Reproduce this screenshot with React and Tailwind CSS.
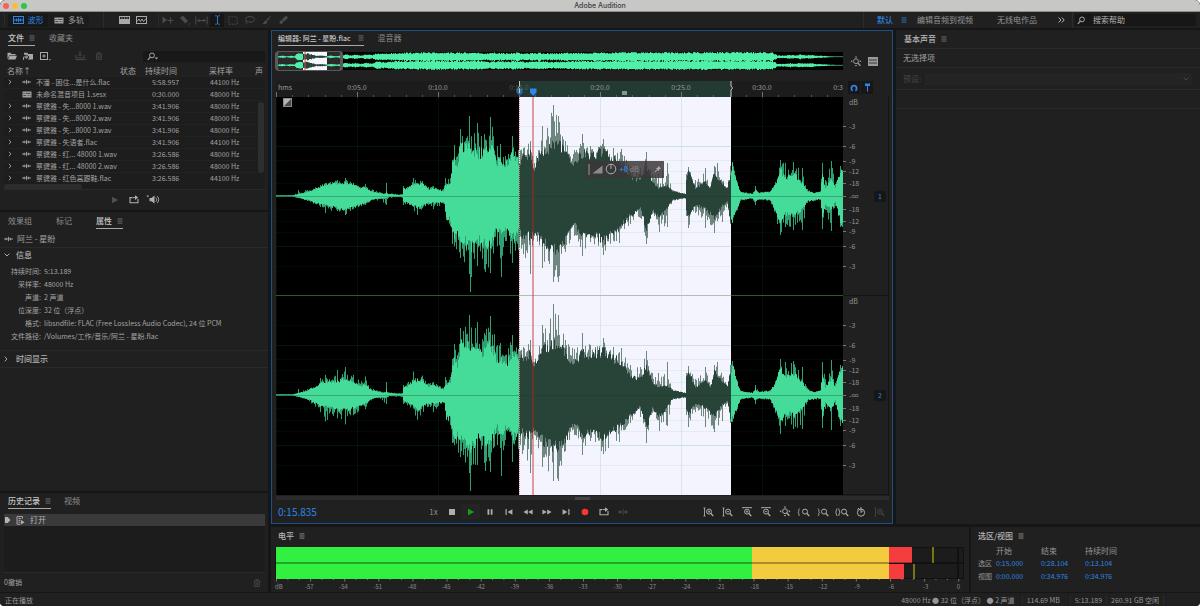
import React from "react";

/* ---------- waveform data: [x, body, peak] above and below the centre line ---------- */
const UPPER = [
  [0, 0.5, 0.5], [17, 0.5, 1], [22, 2, 6], [31, 4, 6], [44, 9, 11], [49, 11, 13], [61, 12, 16], [69, 13, 18], [77, 11, 13],
  [82, 8, 10], [89, 8, 12], [97, 4, 6], [109, 2, 3], [110, 5, 13], [111, 2, 3], [126, 1, 2], [127, 8, 10], [131, 7, 9], [137, 12, 18],
  [146, 12, 15], [152, 7, 9], [157, 8, 10], [167, 5, 7], [169, 10, 18], [174, 14, 18], [176, 31, 36], [178, 36, 51], [181, 31, 40], [184, 50, 67],
  [193, 50, 80], [201, 42, 73], [208, 44, 62], [214, 50, 79], [221, 34, 50], [224, 35, 52], [229, 30, 40], [236, 42, 60], [242, 34, 46],
  [247, 38, 48], [254, 42, 55], [258, 28, 33], [266, 45, 70], [277, 50, 91], [282, 52, 80], [289, 42, 55], [298, 32, 46],
  [306, 43, 62], [314, 40, 50], [327, 44, 57], [337, 36, 48], [345, 34, 47], [354, 18, 30], [364, 16, 28], [370, 30, 44],
  [376, 13, 22], [382, 8, 22], [391, 10, 33], [396, 5, 6], [404, 3, 3], [409, 2, 2], [410, 18, 22], [412, 24, 29], [419, 8, 16],
  [429, 14, 28], [434, 8, 10], [438, 24, 30], [441, 18, 33], [451, 8, 9], [454, 22, 30], [456, 30, 34], [461, 12, 14], [464, 4, 5],
  [476, 2, 2], [479, 6, 10], [482, 3, 4], [494, 4, 5], [499, 12, 14], [504, 26, 36], [509, 18, 33], [517, 22, 34], [526, 13, 28],
  [531, 5, 7], [537, 3, 3], [544, 4, 5], [546, 22, 33], [549, 8, 16], [555, 16, 35], [559, 8, 12], [564, 25, 30], [567, 28, 31],
];
const LOWER = [
  [0, 0.5, 0.5], [17, 0.5, 1], [31, 4, 5], [44, 9, 11], [49, 9, 17], [61, 12, 15], [69, 13, 19], [77, 11, 13], [89, 7, 9],
  [97, 3, 4], [110, 2, 9], [112, 1, 2], [126, 1, 2], [127, 6, 9], [131, 6, 8], [141, 12, 19], [152, 7, 9], [157, 7, 13], [168, 7, 8],
  [170, 22, 24], [174, 24, 30], [176, 38, 48], [184, 42, 62], [193, 50, 78], [194, 52, 96], [201, 44, 70], [209, 48, 76], [214, 50, 77],
  [221, 32, 50], [225, 38, 81], [229, 32, 45], [236, 42, 67], [242, 38, 54], [254, 40, 78], [258, 34, 40], [266, 46, 72], [277, 52, 86],
  [282, 54, 86], [289, 44, 56], [298, 27, 40], [306, 42, 60], [314, 38, 46], [327, 45, 59], [343, 31, 47], [354, 20, 28], [364, 12, 22], [370, 34, 48],
  [376, 14, 18], [383, 22, 36], [391, 12, 31], [396, 4, 5], [409, 2, 3], [410, 15, 20], [412, 20, 32], [419, 9, 17], [429, 13, 32],
  [438, 22, 37], [446, 10, 26], [451, 6, 8], [454, 25, 28], [456, 24, 27], [461, 12, 14], [464, 4, 5], [476, 2, 3], [479, 5, 9],
  [482, 3, 4], [494, 4, 5], [504, 26, 39], [509, 18, 31], [517, 20, 34], [526, 13, 34], [531, 5, 7], [544, 3, 4], [546, 22, 33],
  [549, 8, 14], [555, 14, 35], [559, 6, 10], [564, 26, 31], [567, 28, 33],
];

/* the second channel is louder in the two quiet opening phrases */
const louder = (table) =>
  table.map(([x, b, p]) => {
    const k = x > 40 && x < 96 ? 1.55 : x > 130 && x < 160 ? 1.3 : 1;
    return [x, b * (k > 1 ? 1.2 : 1), p * k];
  });

function at(table, x, k) {
  let i = 1;
  while (i < table.length - 1 && table[i][0] < x) i++;
  const a = table[i - 1];
  const b = table[i];
  const t = Math.min(1, Math.max(0, (x - a[0]) / (b[0] - a[0])));
  return a[k] + (b[k] - a[k]) * t;
}

function random(seed) {
  let s = seed;
  return () => {
    s = (s * 16807) % 2147483647;
    return s / 2147483647;
  };
}

function bars(table, sign, centre, seed, from, to) {
  const r = random(seed);
  let body = "";
  let peak = "";
  for (let x = 0; x < 567; x++) {
    const exact = table.some((p) => p[0] === x);
    const b = at(table, x, 1) * (0.86 + 0.26 * r());
    const span = Math.max(0, at(table, x, 2) - b);
    const n = r();
    const p = b + span * (exact ? 1 : n * n * 0.95);
    if (x >= from && x < to) {
      body += `M${x + 0.5} ${centre}v${(sign * Math.max(0.5, b)).toFixed(1)}`;
      peak += `M${x + 0.5} ${centre}v${(sign * Math.max(0.5, p)).toFixed(1)}`;
    }
  }
  return { body, peak };
}

const CHANNELS = [
  { centre: 99, up: 7789123, down: 99123451, upper: UPPER, lower: LOWER },
  { centre: 298, up: 42424242, down: 313373137, upper: louder(UPPER), lower: louder(LOWER) },
];
const ZONES = [
  { from: 0, to: 243, body: "#44dc98", peak: "#2fa071" },
  { from: 243, to: 455, body: "#284338", peak: "#6f857f" },
  { from: 455, to: 567, body: "#44dc98", peak: "#2fa071" },
];
const WAVES = CHANNELS.flatMap((c) =>
  ZONES.flatMap((z) =>
    [bars(c.upper, -1, c.centre, c.up, z.from, z.to), bars(c.lower, 1, c.centre, c.down, z.from, z.to)].map((d) => ({ ...d, z }))
  )
);

function Waveform() {
  return (
    <svg className="absolute inset-0 h-full w-full" viewBox="0 0 567 398" preserveAspectRatio="none" aria-label="波形">
      <rect width="567" height="398" fill="#000" />
      <rect x="243" width="212" height="398" fill="#f4f4ff" />
      {CHANNELS.map((c) =>
        [-70, -50, -36, -25, -13, 13, 25, 36, 50, 70].map((o) => (
          <path key={c.centre + o} d={`M0 ${c.centre + o + 0.5}H567`} stroke="#148a2a" strokeOpacity={Math.abs(o) === 50 ? 0.16 : 0.07} />
        ))
      )}
      {[0, 81, 162, 324, 405, 486].map((x) => (
        <path key={x} d={`M${x + 0.5} 0V398`} stroke="#1a8a30" strokeOpacity="0.12" />
      ))}
      {WAVES.map((w, i) => (
        <g key={i}>
          <path d={w.peak} stroke={w.z.peak} />
          <path d={w.body} stroke={w.z.body} />
        </g>
      ))}
      {CHANNELS.map((c) => (
        <path key={c.centre} d={`M0 ${c.centre + 0.5}H567`} stroke="#123c22" strokeOpacity="0.3" />
      ))}
      <path d="M0 198.5H243M455 198.5H567" stroke="#2c5a2c" />
      <path d="M243 198.5H455" stroke="#b4beb6" />
      <path d="M243.5 0V398" stroke="#d98080" strokeDasharray="1 1" />
      <path d="M257 0V398" stroke="#c81e1e" strokeOpacity="0.6" strokeWidth="1.4" />
    </svg>
  );
}

const OVERVIEW = [
  [0, 0.5], [6, 1.2], [10, 0.5], [14, 1.1], [18, 0.7], [20, 2.4], [23, 3.6], [27, 2.8], [31, 3.4], [35, 2.4], [40, 1], [46, 1.2], [50, 0.6], [54, 1.4],
  [60, 0.6], [66, 1.6], [70, 2.4], [74, 1.4], [79, 2.2], [84, 1.2], [90, 2.4], [96, 1.8], [100, 3.4], [108, 3], [118, 3.8], [150, 4.3], [180, 4.2], [205, 4.1],
  [212, 3], [216, 4], [230, 3.4], [238, 4.1], [250, 3.2], [262, 4], [276, 3.2], [290, 3.8], [320, 4.2],
  [380, 4.3], [440, 4.4], [496, 4.4], [501, 1.4], [508, 1.2], [514, 2], [519, 1.3], [524, 2.3], [530, 1.6], [534, 2], [540, 1.2], [546, 1], [552, 0.6], [560, 0.3], [567, 0.3],
];

function overviewPath(centre, seed) {
  const r = random(seed);
  let d = "";
  for (let x = 0; x < 567; x++) {
    const h = Math.max(0.3, at(OVERVIEW, x, 1) * (0.76 + 0.34 * r()));
    d += `M${x + 0.5} ${(centre - h).toFixed(1)}v${(2 * h).toFixed(1)}`;
  }
  return d;
}
const OVER = overviewPath(4.8, 15432123) + overviewPath(13.2, 202420242);

function Overview() {
  return (
    <div className="relative h-[18px] flex-1 bg-black">
      <svg className="absolute inset-0 h-full w-full" viewBox="0 0 567 18" preserveAspectRatio="none" aria-label="总览">
        <defs>
          <clipPath id="picked"><rect x="27" width="24" height="18" /></clipPath>
        </defs>
        <rect width="67" height="18" fill="#2b2b2b" />
        <path d={OVER} stroke="#50f0a8" />
        <rect x="27" width="24" height="18" fill="#f6f6ff" />
        <path d={OVER} stroke="#284338" clipPath="url(#picked)" />
        <path d="M29 0V18" stroke="#d05050" />
      </svg>
      <div className="absolute -top-px -left-px h-5 w-[12%] rounded border-x-[3px] border-y border-[#5a5a5a]" />
    </div>
  );
}

/* ---------- icons ---------- */
function Icon({ children, w = 10, h = 10, className = "" }) {
  return (
    <svg
      width={w} height={h} viewBox={`0 0 ${w} ${h}`} fill="none" stroke="currentColor" strokeWidth="1"
      className={`shrink-0 ${className}`} aria-hidden="true"
    >
      {children}
    </svg>
  );
}
const F = { fill: "currentColor", stroke: "none" };

const MenuIcon = ({ className = "text-[#7c7c7c]" }) => (
  <Icon w={6} h={6} className={className}><path d="M.5 .9h5M.5 3h5M.5 5.1h5" strokeWidth=".8" /></Icon>
);
const WaveIcon = ({ className = "text-[#a5a5a5]" }) => (
  <Icon w={9} h={6} className={className}><path d="M0 3h9M2.2 1.7v2.6M4.5 .8v4.4M6.6 1.7v2.6" strokeWidth=".9" /></Icon>
);
const SessionIcon = ({ className = "text-[#a5a5a5]" }) => (
  <Icon w={10} h={7} className={className}>
    <rect x=".5" y=".5" width="9" height="6" {...F} />
    <path d="M1.3 2.4h1.400M3.600 2.400h5M1.3 4.600h3M5.600 4.600h1.200M7.600 4.600h1" stroke="#1a1a1a" strokeWidth=".7" />
  </Icon>
);
const BoxWaveIcon = () => (
  <Icon w={11} h={8}><rect x=".5" y=".5" width="10" height="7" /><path d="M1 4h9M3.5 2.6v2.8M5.5 1.8v4.4M7.5 2.6v2.8" /></Icon>
);
const PlayIcon = ({ className }) => <Icon w={8} h={8} className={className}><path d="M1 .8 7.2 4 1 7.2z" {...F} /></Icon>;
const LoopIcon = () => (
  <Icon w={10} h={9}><path d="M3 2.6H1v5.2h8V4" strokeWidth="1.1" /><path d="M3.4 2.6h3" /><path d="M6 .2 9.2 2.6 6 5z" {...F} /></Icon>
);
const SearchIcon = () => (
  <Icon w={12} h={9}><circle cx="5" cy="3.4" r="2.4" /><path d="M3.3 5.1 .8 7.8" strokeWidth="1.2" /></Icon>
);
const SearchMenuIcon = () => (
  <Icon w={12} h={9}><circle cx="5" cy="3.4" r="2.4" /><path d="M3.3 5.1 .8 7.8" strokeWidth="1.2" /><path d="M7.6 5.4h3.6L9.4 7.6z" {...F} /></Icon>
);
const TrashIcon = ({ className }) => (
  <Icon w={8} h={8} className={className}><path d="M.8 2h6.4M2.8 1.8V.7h2.4v1.1M1.6 2.4v5h4.8v-5M3.2 3.4v3M4.8 3.4v3" strokeWidth=".9" /></Icon>
);
const ZoomBase = ({ cx = 6, sign }) => (
  <>
    <circle cx={cx} cy="4.6" r="2.5" />
    <path d={`M${cx + 1.9} 6.5l2.4 2.6`} strokeWidth="1.3" />
    {sign && <path d={`M${cx - 1.3} 4.6h2.6`} strokeWidth=".8" />}
    {sign === "+" && <path d={`M${cx} 3.3v2.6`} strokeWidth=".8" />}
  </>
);
const FitIcon = ({ className }) => (
  <Icon w={12} h={11} className={className}>
    <circle cx="6" cy="5.2" r="2.4" /><path d="M7.8 7 10.4 9.8" strokeWidth="1.3" />
    <path d="M6 0 7.3 1.6H4.7zM6 10.6 4.7 9h2.6zM.6 5.2 2.2 3.9v2.6zM11.4 5.2 9.8 3.9v2.6z" {...F} />
  </Icon>
);

/* ---------- shared pieces ---------- */
function Tab({ active, small, children }) {
  return (
    <button
      className={`flex h-[15px] items-center border-b leading-[14px] ${small ? "gap-[7px] text-[7px]" : "gap-[5px] text-[8px]"} ${active ? "border-[#a9a9a9] font-medium text-[#c6c6c6]" : "border-transparent text-[#8e8e8e]"}`}
    >
      {children}
      {active && <MenuIcon />}
    </button>
  );
}
function IconButton({ label, className = "", children }) {
  return <button aria-label={label} className={`flex items-center justify-center ${className}`}>{children}</button>;
}
const Rule = ({ className = "h-4" }) => <div className={`w-px bg-[#2c2c2c] ${className}`} />;

/* ---------- top ---------- */
function TitleBar() {
  return (
    <header className="flex h-3 items-center rounded-t-[5px] border-b border-[#8d8d8d] bg-[#c7c7c5] px-[3px]">
      <div className="flex flex-1 gap-[3px]">
        <span className="h-[6px] w-[6px] rounded-full bg-[#fe5f57]" />
        <span className="h-[6px] w-[6px] rounded-full bg-[#febc2e]" />
        <span className="h-[6px] w-[6px] rounded-full bg-[#28c840]" />
      </div>
      <h1 className="font-[Inter,sans-serif] text-[7px] leading-[11px] font-medium text-[#3e3e3e]">Adobe Audition</h1>
      <div className="flex-1" />
    </header>
  );
}

function Toolbar() {
  return (
    <div className="flex h-4 items-center bg-[#202020] pr-1 pl-1 text-[8px]">
      <Rule className="h-3" />
      <button className="ml-[3px] flex h-[13px] w-10 items-center justify-center gap-1 bg-[#181818] text-[#2d86e0]"><BoxWaveIcon />波形</button>
      <button className="ml-px flex h-[13px] w-10 items-center justify-center gap-1 bg-[#1b1b1b] text-[#9b9b9b]"><SessionIcon />多轨</button>
      <div className="ml-[14px]"><Rule /></div>
      <div className="ml-[12px] flex text-[#a8a8a8]">
        <IconButton label="频谱频率显示" className="w-[17px]">
          <Icon w={11} h={8}><rect x=".5" y=".5" width="10" height="7" /><rect x="1" y="3" width="9" height="4.5" {...F} /><path d="M3 1v2M5.5 1v2M8 1v2" strokeWidth=".6" /></Icon>
        </IconButton>
        <IconButton label="频谱音调显示" className="w-[17px]">
          <Icon w={11} h={8}><rect x=".5" y=".5" width="10" height="7" /><path d="M1 5.5 3 3l1.5 2.5L6 3l1.5 2.5L10 2.6" /></Icon>
        </IconButton>
      </div>
      <div className="ml-[8px]"><Rule className="h-3" /></div>
      <div className="flex text-[#4b4b4b]">
        <IconButton label="移动工具" className="w-[17px]"><Icon w={12} h={9}><path d="M.5 .5 5 4 .5 7.5z" {...F} /><path d="M8.5 1.5v6M5.5 4.5h6" /></Icon></IconButton>
        <IconButton label="剃刀工具" className="w-[17px]"><Icon w={11} h={10}><path d="M1 3 4 .5 9 6 6.4 8.6z" {...F} /><path d="M9 9.5 10.8 9.5 10.8 7.8z" {...F} /></Icon></IconButton>
        <IconButton label="滑动工具" className="w-[17px]"><Icon w={13} h={9}><path d="M.8 .5v8M12.2 .5v8M2.5 4.5h8" /><path d="M2 4.5 4.5 2.6v3.8zM11 4.5 8.5 2.6v3.8z" {...F} /></Icon></IconButton>
        <IconButton label="时间选择工具" className="h-[13px] w-[14px] bg-[#161616] text-[#2d86e0]"><Icon w={7} h={10}><path d="M1.2 .8h1.6l.7.7.7-.7h1.6M3.5 1v8M1.2 9.2h1.6l.7-.7.7.7h1.6" strokeWidth=".9" /></Icon></IconButton>
        <IconButton label="框选工具" className="w-[17px]"><Icon w={10} h={9}><rect x=".8" y=".8" width="8.4" height="7.4" strokeDasharray="1.6 1.2" /></Icon></IconButton>
        <IconButton label="套索选择工具" className="w-[17px]"><Icon w={11} h={9}><ellipse cx="6" cy="3.3" rx="4.4" ry="2.7" /><path d="M2.4 4.8C.6 6.4 3.4 6.2 2.6 8.4" strokeWidth=".9" /></Icon></IconButton>
        <IconButton label="画笔选择工具" className="w-[17px]"><Icon w={10} h={10}><path d="M9.6.4 4.4 4.6 5.6 6z" {...F} /><path d="M4 5.2c-1.6 0-1.4 2.4-3.6 3.4C2.6 9.800 5.400 8.800 5.200 6.500z" {...F} /></Icon></IconButton>
        <IconButton label="污点修复画笔" className="w-[17px]"><Icon w={11} h={10}><path d="M1.800 6.200 7 1.400c1.600-1 3.400.6 2.400 2.200L4.200 8.600c-1.600 1.200-3.600-.8-2.400-2.400z" {...F} /><path d="M3.600 4.600 6 7" stroke="#202020" strokeWidth=".8" /></Icon></IconButton>
      </div>
      <nav className="ml-auto flex items-center text-[#969696]">
        <Rule />
        <button className="ml-[13px] flex items-center gap-[8px] font-medium text-[#2d86e0]">默认<MenuIcon className="text-[#2d86e0]" /></button>
        <button className="ml-[10px]">编辑音频到视频</button>
        <button className="ml-6">无线电作品</button>
        <IconButton label="更多工作区" className="ml-[14px] w-[21px] text-[#b5b5b5]"><Icon w={7} h={6}><path d="M.6.500 3 3 .6 5.500M3.800.500 6.200 3 3.800 5.500" /></Icon></IconButton>
        <Rule />
        <label className="ml-[2px] flex h-[12px] items-center gap-1 bg-[#171717] pl-[2px] text-[#a8a8a8]">
          <SearchIcon />
          <input aria-label="搜索帮助" placeholder="搜索帮助" className="w-[103px] bg-transparent text-[8px] leading-3 placeholder:text-[#b4b4b4] outline-none" />
        </label>
      </nav>
    </div>
  );
}

/* ---------- left column ---------- */
const FILES = [
  ["不潘 - 困住...是什么.flac", "5:58.957", "44100 Hz", true],
  ["未命名混音项目 1.sesx", "0:30.000", "48000 Hz", false],
  ["蔡健雅 - 失...8000 1.wav", "3:41.906", "48000 Hz", true],
  ["蔡健雅 - 失...8000 2.wav", "3:41.906", "48000 Hz", true],
  ["蔡健雅 - 失...8000 3.wav", "3:41.906", "48000 Hz", true],
  ["蔡健雅 - 失语者.flac", "3:41.906", "44100 Hz", true],
  ["蔡健雅 - 红... 48000 1.wav", "3:26.586", "48000 Hz", true],
  ["蔡健雅 - 红... 48000 2.wav", "3:26.586", "48000 Hz", true],
  ["蔡健雅 - 红色高跟鞋.flac", "3:26.586", "44100 Hz", true],
];

function FilesPanel() {
  return (
    <section className="flex flex-col bg-[#202020]">
      <div className="flex gap-[14px] px-2 pt-px"><Tab active>文件</Tab><Tab>收藏夹</Tab></div>
      <div className="mt-1 flex h-3 items-center pr-[3px] pl-[3px] text-[#a8a8a8]">
        <IconButton label="打开文件" className="w-[17px]"><Icon w={10} h={8}><path d="M.5 7V.8h3l1 1.2h4v1.200H2.400z" {...F} /><path d="M2.600 3.700H10L8.400 7.400H1z" {...F} /></Icon></IconButton>
        <IconButton label="导入文件" className="w-[17px]"><Icon w={11} h={9}><path d="M1 .8h3.200L5.200 2H10v5.600H5L6.500 5 4 2.800H1z" {...F} /><path d="M.5 8V5h3M3 3.600 5 5 3 6.600z" strokeWidth=".9" /></Icon></IconButton>
        <IconButton label="新建文件" className="w-[17px]"><Icon w={11} h={9}><rect x=".5" y=".5" width="7" height="7" /><path d="M4 2.400v3.200M2.400 4h3.200" /><path d="M8.600 7.200h2.400L9.800 8.600z" {...F} /></Icon></IconButton>
        <IconButton label="插入到多轨混音中" className="ml-[18px] w-[18px] text-[#484848]"><Icon w={12} h={10}><path d="M1 4v4.600h8V4M5 0v4M3.400 3 5 5l1.600-2M2.500 6.800h5" /><path d="M9.800 8.200H12l-1.100 1.300z" {...F} /></Icon></IconButton>
        <IconButton label="删除" className="w-[18px] text-[#484848]"><TrashIcon /></IconButton>
        <label className="ml-auto flex h-[11px] w-[122px] items-center gap-1 bg-[#181818] pl-1"><SearchMenuIcon /><input aria-label="搜索文件" className="w-[90px] bg-transparent text-[7px] leading-[10px] outline-none" /></label>
      </div>
      <div className="relative mr-[3px] ml-1 overflow-hidden border-b border-[#2a2a2a]">
        <table className="w-full table-fixed border-collapse text-left text-[7px] leading-[11px] text-[#a2a2a2]">
          <colgroup><col className="w-[116px]" /><col className="w-[25px]" /><col className="w-16" /><col className="w-[46px]" /><col /></colgroup>
          <thead>
            <tr className="h-[14px] align-bottom text-[8px] whitespace-nowrap">
              <th className="pl-[3px] font-normal">名称↑</th><th className="font-normal">状态</th>
              <th className="font-normal">持续时间</th><th className="font-normal">采样率</th>
              <th className="font-normal">声</th>
            </tr>
          </thead>
          <tbody className="bg-[#1d1d1d]">
            {FILES.map(([name, time, rate, audio]) => (
              <tr key={name} className="h-3 border-t border-[#222]">
                <td>
                  <div className="flex items-center whitespace-nowrap">
                    <span className="flex w-[18px] pl-1">{audio && <Icon w={4} h={6}><path d="M.8.800 3 3 .8 5.200" strokeWidth=".9" /></Icon>}</span>
                    <span className="flex w-[14px]">{audio ? <WaveIcon /> : <SessionIcon />}</span>{name}
                  </div>
                </td>
                <td />
                <td className="pl-[7px]">{time}</td>
                <td className="pl-px whitespace-nowrap">{rate}</td>
                <td />
              </tr>
            ))}
          </tbody>
        </table>
        <div className="h-[5px] bg-[#1d1d1d]"><div className="h-[6px] w-[78px] rounded-full bg-[#2c2c2c]" /></div>
        <div className="absolute top-[40px] right-px h-[71px] w-[6px] rounded-full bg-[#2e2e2e]" />
      </div>
      <div className="flex h-5 items-center justify-center pb-px text-[#b0b0b0]">
        <IconButton label="播放" className="w-[19px] text-[#4f4f4f]"><PlayIcon /></IconButton>
        <IconButton label="循环播放" className="w-[19px]"><LoopIcon /></IconButton>
        <IconButton label="自动播放" className="w-[19px]"><Icon w={14} h={9}><path d="M.5.500 3 .5 1.800 2.600z" {...F} /><path d="M3.500 3h2L8.500.600v8L5.500 6.200h-2z" {...F} /><path d="M9.800 2.600c1 1 1 3 0 4M11.200 1.200c2 2 2 4.800 0 6.800" strokeWidth=".9" /></Icon></IconButton>
      </div>
    </section>
  );
}

const PROPS = [
  ["持续时间:", "5:13.189"], ["采样率:", "48000 Hz"], ["声道:", "2 声道"], ["位深度:", "32 位（浮点）"],
  ["格式:", "libsndfile: FLAC (Free Lossless Audio Codec), 24 位 PCM"], ["文件路径:", "/Volumes/工作/音乐/阿兰 - 星盼.flac"],
];

function PropertiesPanel() {
  return (
    <section className="flex flex-1 flex-col bg-[#202020] text-[#a4a4a4]">
      <div className="flex gap-6 px-2 pt-[2px]"><Tab>效果组</Tab><Tab>标记</Tab><Tab active>属性</Tab></div>
      <div className="mt-px flex h-[18px] items-center gap-1 border-b border-[#292929] pl-1 text-[8px]"><WaveIcon />阿兰 - 星盼</div>
      <button className="flex h-[14px] items-center gap-[6px] pl-1 text-[8px] font-medium text-[#b4b4b4]"><Icon w={6} h={4}><path d="M.6.600 3 3 5.400.600" strokeWidth=".9" /></Icon>信息</button>
      <dl className="mt-[3px] grid grid-cols-[41px_1fr] gap-x-[3px] text-[7px] leading-[13px]">
        {PROPS.map(([k, v]) => (
          <React.Fragment key={k}><dt className="text-right">{k}</dt><dd className="whitespace-nowrap">{v}</dd></React.Fragment>
        ))}
      </dl>
      <button className="mt-[7px] flex h-[18px] items-center gap-[8px] border-y border-[#292929] pl-1 text-[8px] font-medium text-[#b4b4b4]"><Icon w={4} h={6}><path d="M.8.600 3 3 .8 5.400" strokeWidth=".9" /></Icon>时间显示</button>
    </section>
  );
}

function HistoryPanel() {
  return (
    <section className="flex h-[99px] flex-col bg-[#202020] text-[#a4a4a4]">
      <div className="flex gap-[13px] px-2 pt-px"><Tab active>历史记录</Tab><Tab>视频</Tab></div>
      <ul className="mt-[5px] mr-[3px] ml-1 flex-1 border-b border-[#2a2a2a] bg-[#1c1c1c]">
        <li className="flex h-3 items-center bg-[#3a3a3a] text-[8px] text-[#b4b4b4]">
          <Icon w={7} h={8}><path d="M1 1h2.600L6.500 4 3.600 7H1z" {...F} /></Icon>
          <Icon w={9} h={9} className="mx-[5px]"><path d="M1 .6h5.500v2M1 .6v7.600h3.500M2.400 2.600h2.800M2.400 4.400h2M2.400 6.200h2" strokeWidth=".9" /><path d="M5 4 8.500 6.200 5 8.600z" {...F} /></Icon>
          打开
        </li>
      </ul>
      <div className="flex h-[19px] items-center justify-between pr-[7px] pl-1 text-[7px]">0撤销<IconButton label="删除" className="text-[#4a4a4a]"><TrashIcon /></IconButton></div>
    </section>
  );
}

/* ---------- editor ---------- */
const RULER = ["0:05.0", "0:10.0", "0:15.0", "0:20.0", "0:25.0", "0:30.0"];

function Ruler() {
  return (
    <div className="relative h-4 flex-1 bg-[#1c1c1c]">
      <svg className="absolute inset-0 h-full w-full" viewBox="0 0 567 16" preserveAspectRatio="none" aria-hidden="true">
        <rect x="243" width="212" height="16" fill="#223a31" />
        {Array.from({ length: 35 }, (_, i) => (
          <path key={i} d={`M${Math.round(i * 16.2) + 0.5} ${i % 5 ? 14 : 11}V16`} stroke="#7d7d7d" strokeOpacity={i % 5 ? 0.6 : 0.9} />
        ))}
        <rect x="346" y="10" width="5" height="4" fill="#87948f" />
        <path d="M240.500 7.500h6v4L243.500 15 240.500 11.500z" fill="#2a6aa8" />
        <path d="M254 7.500h6.500v4L257.200 15 254 11.500z" fill="#2f86ef" />
        <path d="M243.500 0v5l-1 1.500 1 1.500v4M455 0v5l1.500 2-1.500 2v7" stroke="#c8c8c8" fill="none" />
      </svg>
      <div className="relative grid grid-cols-[1fr_2fr_2fr_2fr_2fr_2fr_2fr_1fr] text-center text-[7px] leading-3 text-[#9c9c9c]">
        <span className="pl-[2px] text-left">hms</span>
        {RULER.map((t) => <span key={t} className={t === "0:15.0" ? "opacity-40" : ""}>{t}</span>)}
        <span className="text-right">0:3</span>
      </div>
    </div>
  );
}

const DB = ["dB", "-3", "-6", "-9", "-12", "-18", "-∞", "-18", "-12", "-9", "-6", "-3"];

function DbScale({ channel }) {
  return (
    <div className="flex flex-1 border-r border-b border-[#141414] pr-[2px]">
      <div className="grid flex-1 grid-rows-[5fr_24fr_20fr_15fr_10fr_12fr_13fr_13fr_12fr_10fr_15fr_20fr_29fr] text-[7px] text-[#939393]">
        <span />
        {DB.map((d, i) => (
          <div key={i} className="flex h-0 items-center gap-[3px] leading-none"><i className={`h-px w-[3px] ${i ? "bg-[#777]" : ""}`} />{d}</div>
        ))}
      </div>
      <button aria-label={`声道 ${channel}`} className="h-[11px] w-3 self-center bg-[#161616] text-[7px] leading-[11px] text-[#2d86e0]">{channel}</button>
    </div>
  );
}

function Hud() {
  return (
    <div className="absolute top-[16%] left-[54.6%] flex h-[17px] w-[78px] items-center bg-[#3b3638]/85 text-[7px] text-[#8a8a8a]">
      <div className="ml-[2px] h-[11px] w-[2px] bg-[#6a6a6a]" />
      <Icon w={11} h={9} className="ml-[2px]"><path d="M.5 8.500 10.500.500v8z" fill="#8a8a8a" stroke="none" /></Icon>
      <Icon w={12} h={12} className="ml-[2px] text-[#b0b0b0]"><circle cx="6" cy="6" r="4.800" /><path d="M6 1.500V6" /></Icon>
      <span className="ml-[3px] font-bold text-[#2d86e0]">+0</span><span className="ml-[2px]">dB</span>
      <Icon w={8} h={8} className="mr-[2px] ml-auto text-[#b0b0b0]"><path d="M4.500 1 7 3.500 5.500 4 4.500 6 2 3.500 4 2.500z" {...F} /><path d="M3 5 .8 7.200" /></Icon>
    </div>
  );
}

const TRANSPORT = [
  ["停止", "", <Icon w={8} h={8}><rect x="1" y="1" width="6" height="6" {...F} /></Icon>],
  ["播放", "bg-[#242424] text-[#1a9c1a]", <PlayIcon />],
  ["暂停", "", <Icon w={8} h={8}><path d="M1.500 1.200h1.800v5.600H1.500zM4.700 1.200h1.800v5.600H4.700z" {...F} /></Icon>],
  ["转到上一个", "", <Icon w={8} h={8}><path d="M.5 1h1.200v6H.5zM7.400 1.200v5.600L2.600 4z" {...F} /></Icon>],
  ["快退", "", <Icon w={10} h={6}><path d="M4.800.600v4.800L.4 3zM9.600.600v4.800L5.200 3z" {...F} /></Icon>],
  ["快进", "", <Icon w={10} h={6}><path d="M.4.600 4.800 3 .4 5.400zM5.200.600 9.600 3 5.200 5.400z" {...F} /></Icon>],
  ["转到下一个", "", <Icon w={8} h={8}><path d="M6.300 1h1.200v6H6.300zM.6 1.200 5.400 4 .6 6.800z" {...F} /></Icon>],
  ["录制", "text-[#fb3434]", <Icon w={8} h={8}><circle cx="4" cy="4" r="3.300" {...F} /></Icon>],
  ["循环播放", "", <LoopIcon />],
  ["跳过所选项目", "text-[#4c4c4c]", <Icon w={10} h={8}><path d="M0 4h3M7 4h3M5 1v6" strokeWidth=".8" /><path d="M1.500 2 4 4 1.500 6zM8.500 2 6 4l2.500 2z" {...F} /></Icon>],
];

const VBAR = <path d="M1.500 1v8M.5 1h2M.5 9h2" strokeWidth=".9" />;
const HBAR = <path d="M1.500 .6h9M2 0v1.400M10 0v1.400" strokeWidth=".9" />;
const ZOOMS = [
  ["放大(振幅)", "", <Icon w={11} h={10}>{VBAR}<ZoomBase sign="+" /></Icon>],
  ["缩小(振幅)", "", <Icon w={11} h={10}>{VBAR}<ZoomBase sign="-" /></Icon>],
  ["放大(时间)", "", <Icon w={12} h={10}>{HBAR}<ZoomBase sign="+" /></Icon>],
  ["缩小(时间)", "", <Icon w={12} h={10}>{HBAR}<ZoomBase sign="-" /></Icon>],
  ["全部缩小", "", <FitIcon />],
  ["放大入点", "", <Icon w={13} h={10}><path d="M2.600 1.500 1.800 2.400v2l-.8.800.8.800v2l.8.900" strokeWidth=".9" /><ZoomBase cx={8} /></Icon>],
  ["放大出点", "", <Icon w={12} h={10}><path d="M1 1.500l.8.900v2l.8.800-.8.800v2l-.8.900" strokeWidth=".9" /><ZoomBase cx={7} /></Icon>],
  ["缩放至选区", "", <Icon w={14} h={10}><path d="M2 1.500.800 5.200 2 9M3.600 1.500 4.800 5.200 3.600 9" strokeWidth=".9" /><ZoomBase cx={9} /></Icon>],
  ["缩放至时间", "", <Icon w={10} h={10}><circle cx="5" cy="5.600" r="3.600" /><path d="M5 0v5.600l2-2M1.500 2.500 3 1" /></Icon>],
  ["切换缩放", "text-[#444]", <Icon w={11} h={10}>{VBAR}<ZoomBase sign="+" /></Icon>],
];

function Editor() {
  return (
    <section className="flex flex-1 flex-col border border-[#1d4f8c] bg-[#202020] pr-[3px] pl-1">
      <div className="flex h-4 gap-[14px] pl-[2px]"><Tab active small>编辑器: 阿兰 - 星盼.flac</Tab><Tab>混音器</Tab></div>
      <div className="mt-[5px] flex">
        <Overview />
        <div className="flex w-[46px] items-center gap-[6px] pl-[7px] text-[#9a9a9a]">
          <IconButton label="全部缩小"><FitIcon /></IconButton>
          <IconButton label="轨道"><Icon w={10} h={9}><rect x=".5" y=".5" width="9" height="8" fill="currentColor" /><path d="M1 3h8M1 6h8" stroke="#202020" strokeWidth=".8" /></Icon></IconButton>
        </div>
      </div>
      <div className="mt-[11px] flex">
        <Ruler />
        <div className="flex w-[46px] gap-px pl-[5px] text-[#2f86ef]">
          <IconButton label="对齐" className="h-[13px] w-3 bg-[#171717]"><Icon w={8} h={8}><path d="M2.600 6.800C.6 5.600 1 1.600 4 1.600s3.400 4 1.400 5.200" strokeWidth="1.700" /></Icon></IconButton>
          <IconButton label="标记" className="h-[13px] w-3 bg-[#171717]"><Icon w={7} h={9}><path d="M1 .5h5v2.500H1z" {...F} /><path d="M3.500 3v5.500" /></Icon></IconButton>
        </div>
      </div>
      <div className="flex flex-1">
        <div className="relative flex-1 overflow-hidden bg-black">
          <Waveform />
          <Icon w={9} h={9} className="absolute top-px left-[7px]"><rect x=".5" y=".5" width="8" height="8" fill="#4a4a4a" stroke="#8a8a8a" /><path d="M1 1h7L1 8z" fill="#b5b5b5" stroke="none" /></Icon>
          <Hud />
        </div>
        <div className="flex w-[46px] flex-col"><DbScale channel={1} /><DbScale channel={2} /></div>
      </div>
      <div className="mt-px flex h-1 items-center justify-center bg-[#2b2b2b]"><div className="h-[3px] w-[15px] bg-[#454545]" /></div>
      <div className="flex h-[23px] items-center text-[#adadad]">
        <output className="w-[149px] pl-[2px] text-[10px] leading-4 text-[#2d86e0]">0:15.835</output>
        <button className="w-[17px] text-[8px] text-[#8e8e8e]">1x</button>
        {TRANSPORT.map(([label, cls, icon]) => (
          <IconButton key={label} label={label} className={`h-[15px] w-[19px] ${cls}`}>{icon}</IconButton>
        ))}
        <div className="ml-auto flex">
          {ZOOMS.map(([label, cls, icon]) => (
            <IconButton key={label} label={label} className={`h-[15px] w-[19px] ${cls}`}>{icon}</IconButton>
          ))}
        </div>
      </div>
    </section>
  );
}

/* ---------- right and bottom ---------- */
function SoundPanel() {
  return (
    <section className="w-[304px] bg-[#202020] text-[8px] text-[#a0a0a0]">
      <div className="flex h-[19px] items-center gap-[5px] border-b border-[#2a2a2a] pl-2 font-medium text-[#b8b8b8]">基本声音<MenuIcon /></div>
      <p className="h-[19px] border-b border-[#2a2a2a] pl-[7px] leading-[18px]">无选择项</p>
      <div className="flex h-[22px] items-center gap-1 border-b border-[#2a2a2a] pr-2 pl-[7px] text-[#474747]">
        <label htmlFor="preset">预设:</label>
        <div className="relative flex flex-1 items-center">
          <select id="preset" disabled className="h-3 w-full appearance-none bg-[#242424] text-[8px]" />
          <Icon w={6} h={4} className="absolute right-[3px]"><path d="M.6.600 3 3 5.400.600" /></Icon>
        </div>
      </div>
      <div className="h-[19px] border-b border-[#2a2a2a]" />
    </section>
  );
}

const MARKS = Array.from({ length: 19 }, (_, i) => i * 3 - 57);

function Levels() {
  return (
    <section className="flex flex-1 flex-col bg-[#202020] pr-[5px] pl-1">
      <div className="flex h-[17px] items-center gap-[5px] pl-[3px] text-[8px] font-medium text-[#b8b8b8]">电平<MenuIcon className="text-[#a0a0a0]" /></div>
      <svg className="mt-[3px] h-[35px] w-full" viewBox="0 0 689 35" preserveAspectRatio="none" aria-label="电平表">
        <rect width="689" height="32" fill="#111" />
        <rect x="614" y="1" width="68" height="14" fill="#1c1c1c" /><rect x="614" y="17" width="68" height="14" fill="#1c1c1c" />
        <rect x="684" y="1" width="4" height="14" fill="#1c1c1c" /><rect x="684" y="17" width="4" height="14" fill="#1c1c1c" />
        <rect x="1" width="476" height="32" fill="#32f040" />
        <rect x="477" width="137" height="32" fill="#f2cb3f" />
        <rect x="614" width="23" height="16" fill="#f63d3d" /><rect x="614" y="17" width="15" height="15" fill="#f63d3d" />
        <rect x="1" y="15.500" width="636" height="1" fill="#000" fillOpacity=".6" />
        <rect x="657" width="2" height="16" fill="#77750f" /><rect x="638" y="17" width="2" height="15" fill="#77750f" />
        {Array.from({ length: 61 }, (_, i) => <path key={i} d={`M${1.500 + i * 11.370} 32v${i % 3 ? 1 : 2.500}`} stroke="#777" />)}
      </svg>
      <div className="grid grid-cols-[1fr_repeat(19,2fr)_1fr] pr-1 text-center text-[6px] leading-[10px] text-[#8a8a8a]">
        <span className="text-left">dB</span>
        {MARKS.map((m) => <span key={m}>{m}</span>)}
        <span className="text-right">0</span>
      </div>
    </section>
  );
}

function SelectionView() {
  return (
    <section className="w-[229px] bg-[#202020] pl-[7px] text-[#969696]">
      <div className="flex h-[17px] items-center gap-[5px] text-[8px] font-medium text-[#b8b8b8]">选区/视图<MenuIcon className="text-[#a0a0a0]" /></div>
      <table className="table-fixed text-left text-[7px] leading-[13px] whitespace-nowrap">
        <colgroup><col className="w-[18px]" /><col className="w-[45px]" /><col className="w-[44px]" /><col className="w-10" /></colgroup>
        <thead><tr className="text-[8px]"><td /><th className="font-normal">开始</th><th className="font-normal">结束</th><th className="font-normal">持续时间</th></tr></thead>
        <tbody className="text-[#2d86e0]">
          <tr><th className="font-normal text-[#969696]">选区</th><td>0:15.000</td><td>0:28.104</td><td>0:13.104</td></tr>
          <tr><th className="font-normal text-[#969696]">视图</th><td>0:00.000</td><td>0:34.976</td><td>0:34.976</td></tr>
        </tbody>
      </table>
    </section>
  );
}

function StatusBar() {
  return (
    <footer className="mt-px flex h-[13px] items-center rounded-b-[4px] bg-[#202020] pr-9 pl-[5px] text-[7px] leading-3 text-[#969696]">
      <span>正在播放</span>
      <div className="ml-auto flex items-center">
        <span className="pr-[7px]">48000 Hz ● 32 位（浮点） ● 2 声道</span><Rule className="h-2" />
        <span className="px-1">114.69 MB</span><Rule className="ml-[6px] h-2" />
        <span className="px-1">5:13.189</span><Rule className="h-2" />
        <span className="px-1">260.91 GB 空闲</span><Rule className="h-2" />
      </div>
    </footer>
  );
}

export default function App() {
  return (
    <div className="bg-white">
      <div className="flex min-h-screen flex-col overflow-hidden rounded-t-[5px] rounded-b-[4px] bg-[#161616] font-['Noto_Sans_CJK_SC',sans-serif]">
        <TitleBar />
        <Toolbar />
        <main className="mt-[2px] flex flex-1 gap-[3px]">
          <div className="flex w-[268px] shrink-0 flex-col gap-[2px]"><FilesPanel /><PropertiesPanel /><HistoryPanel /></div>
          <div className="flex min-w-0 flex-1 flex-col gap-[3px]">
            <div className="flex flex-1 gap-[3px]"><Editor /><SoundPanel /></div>
            <div className="flex h-[65px] gap-[2px]"><Levels /><SelectionView /></div>
          </div>
        </main>
        <StatusBar />
      </div>
    </div>
  );
}
